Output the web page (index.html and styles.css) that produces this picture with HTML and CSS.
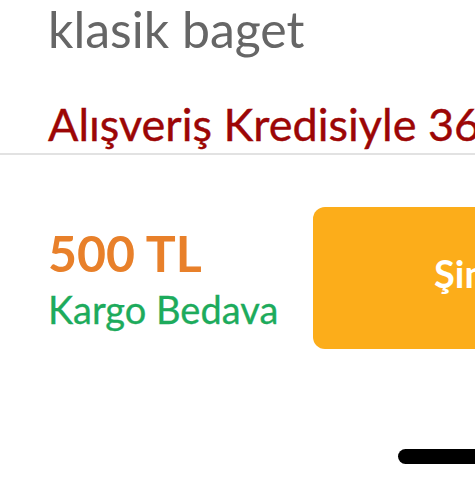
FILE: index.html
```html
<!DOCTYPE html>
<html lang="tr">
<head>
<meta charset="utf-8">
<link rel="stylesheet" href="styles.css">
</head>
<body>
<div class="page">
  <div class="head">
    <div class="title">klasik baget</div>
    <div class="credit">Alışveriş Kredisiyle 36 Aya Varan Taksit</div>
  </div>
  <div class="divider"></div>
  <div class="buy">
    <div class="price-col">
      <div class="price">500 TL</div>
      <div class="cargo">Kargo Bedava</div>
    </div>
    <div class="btn">Şimdi Al</div>
  </div>
  <div class="home-bar"></div>
</div>
</body>
</html>
```
FILE: styles.css
```css
html, body {
  margin: 0;
  padding: 0;
  background: #fff;
}
.page {
  width: 475px;
  height: 490px;
  overflow: hidden;
  position: relative;
  font-family: Lato, "Noto Sans", sans-serif;
}
.head {
  padding-left: 48px;
  padding-top: 1px;
  white-space: nowrap;
}
.title {
  font-size: 50px;
  line-height: 56px;
  color: #666666;
}
.credit {
  font-size: 45px;
  line-height: 54px;
  color: #9c0606;
  margin-top: 40px;
  -webkit-text-stroke: 0.4px #9c0606;
}
.divider {
  height: 2px;
  background: #e2e2e2;
  margin-top: 2px;
}
.buy {
  display: flex;
  align-items: flex-start;
  padding-left: 48px;
  margin-top: 52px;
}
.price-col {
  width: 265px;
  flex-shrink: 0;
  white-space: nowrap;
  padding-top: 20px;
}
.price {
  font-size: 50px;
  font-weight: 700;
  color: #e8802a;
  line-height: 52px;
}
.cargo {
  font-size: 38px;
  color: #1dab5c;
  line-height: 46px;
  margin-top: 7px;
  -webkit-text-stroke: 0.3px #1dab5c;
}
.btn {
  flex-shrink: 0;
  width: 420px;
  height: 142px;
  border-radius: 12px;
  background: #fcad1a;
  color: #fff;
  font-size: 38px;
  font-weight: 700;
  line-height: 132px;
  padding-left: 121px;
  box-sizing: border-box;
  white-space: nowrap;
}
.home-bar {
  position: absolute;
  left: 398px;
  top: 449px;
  width: 160px;
  height: 15px;
  border-radius: 8px;
  background: #000;
}
```
